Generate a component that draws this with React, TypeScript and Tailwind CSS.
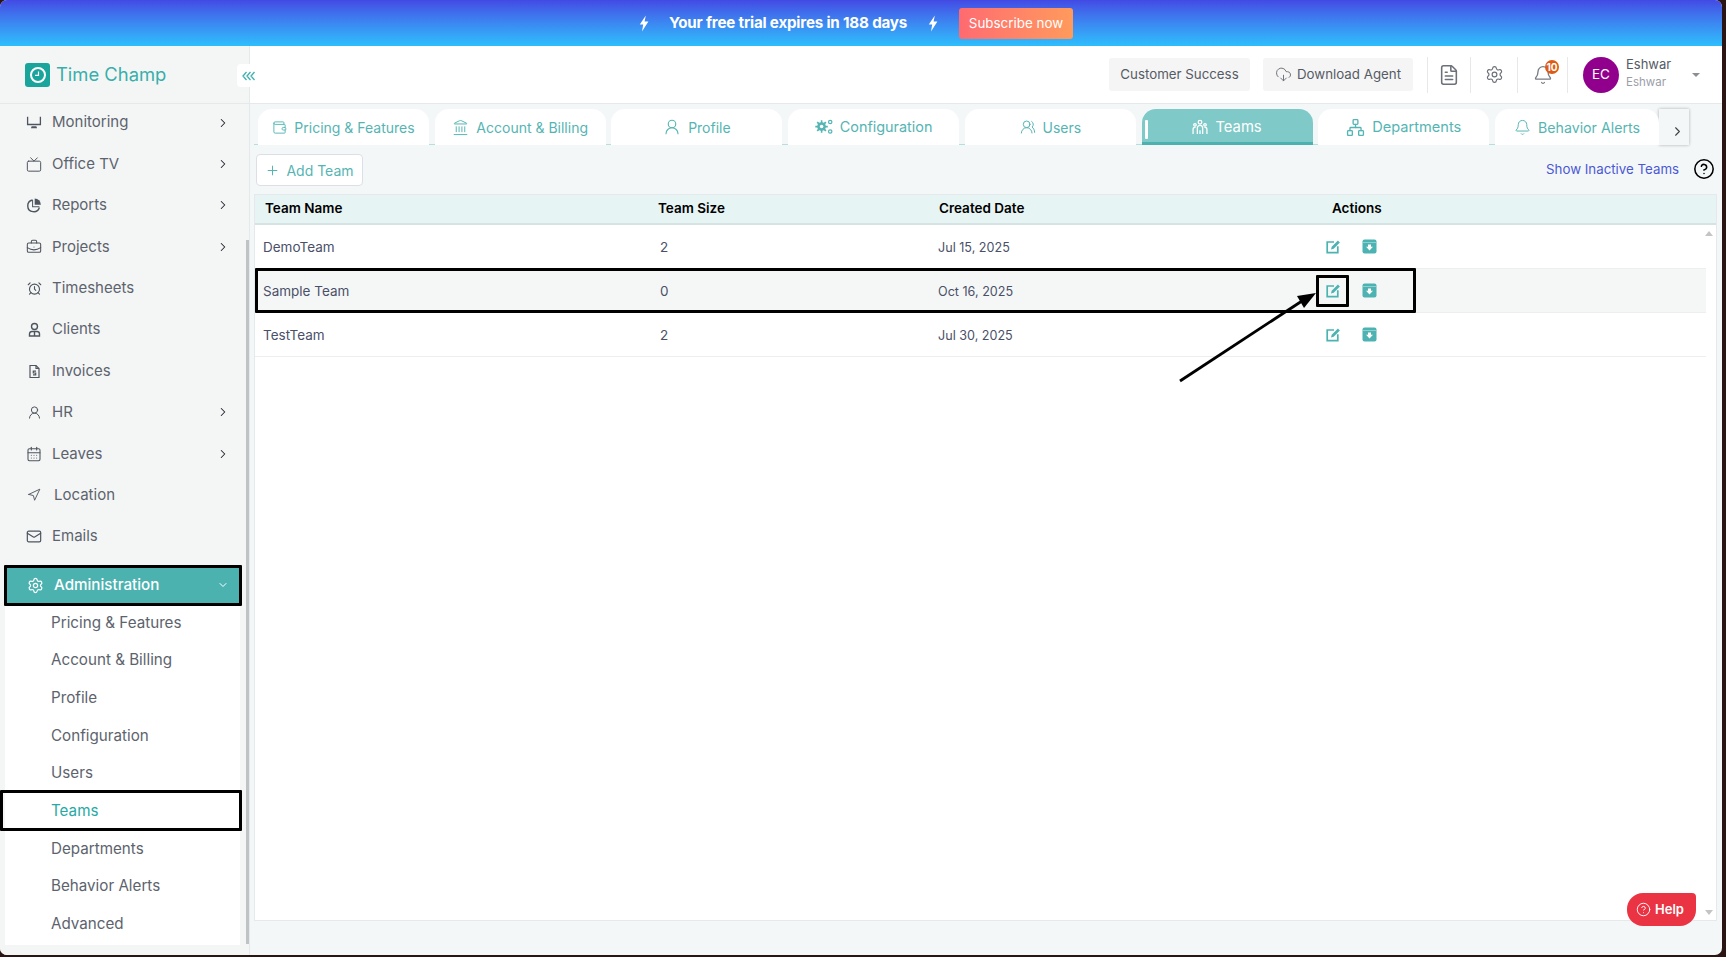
import {
  AlarmClock,
  Bell,
  BriefcaseBusiness,
  CalendarDays,
  ChevronDown,
  ChevronRight,
  CircleHelp,
  CloudDownload,
  FileText,
  Landmark,
  Mail,
  Navigation,
  Network,
  Plus,
  Settings,
  Tv,
  UserRound,
  UsersRound,
  Wallet,
} from "lucide-react";
import type { ReactNode } from "react";

function MonitorIcon() {
  return (
    <svg width="17" height="17" viewBox="0 0 17 17" fill="currentColor">
      <path d="M1 2.5h1.4v7.2h12.2V2.5H16v9H1z" />
      <path d="M6 12.5h5l.8 2H5.2z" />
    </svg>
  );
}

function ReportsIcon() {
  return (
    <svg width="17" height="17" viewBox="0 0 17 17" fill="none" stroke="currentColor" strokeWidth="1.5">
      <path d="M7 2.6a6.3 6.3 0 1 0 7.2 8" />
      <path d="M9.2 1v6.6h6.6A6.6 6.6 0 0 0 9.2 1z" fill="currentColor" stroke="none" />
      <path d="M7 2.6v7.2h7.2" strokeWidth="1.1" />
    </svg>
  );
}

function ClientIcon() {
  return (
    <svg width="15" height="15" viewBox="0 0 15 15" fill="none" stroke="currentColor" strokeWidth="1.4">
      <circle cx="7.5" cy="4.5" r="3" />
      <path d="M2.5 14v-2.2a2.5 2.5 0 0 1 2.5-2.3h5a2.5 2.5 0 0 1 2.5 2.3V14z" />
      <path d="M7.5 9.5V14" />
    </svg>
  );
}

function InvoiceIcon() {
  return (
    <svg width="15" height="15" viewBox="0 0 15 15" fill="none" stroke="currentColor" strokeWidth="1.2">
      <path d="M3 1.5h6l3 3v9H3z" />
      <path d="M9 1.5v3h3" />
      <path d="M9 7.2H6.3v1.8h2.4v1.8H6" />
    </svg>
  );
}

function TeamsIcon() {
  return (
    <svg width="16" height="16" viewBox="0 0 15 15" fill="none" stroke="currentColor" strokeWidth="1.2">
      <circle cx="7.5" cy="3" r="1.7" />
      <circle cx="2.8" cy="5.5" r="1.2" />
      <circle cx="12.2" cy="5.5" r="1.2" />
      <path d="M5 14V8.5a2.5 2.5 0 0 1 5 0V14M7.5 10.5V14" />
      <path d="M1 14V9.5a1.8 1.8 0 0 1 2.4-1.6M14 14V9.5a1.8 1.8 0 0 0-2.4-1.6" />
    </svg>
  );
}

function ConfigIcon() {
  return (
    <svg width="18" height="16" viewBox="0 0 18 16" fill="currentColor">
      <path d="M5.8 1.2h1.6v2l1.5.6 1.4-1.3 1.2 1.2-1.3 1.4.6 1.6h2v1.7h-2l-.6 1.5 1.3 1.4-1.2 1.2-1.4-1.3-1.5.6v2H5.8v-2l-1.6-.6-1.4 1.3-1.2-1.2 1.3-1.4-.6-1.5H.3V6.7h2l.6-1.6L1.6 3.7l1.2-1.2 1.4 1.3 1.6-.6z" />
      <circle cx="6.6" cy="7.5" r="1.8" fill="#ffffff" />
      <circle cx="15.2" cy="3" r="1.7" fill="none" stroke="currentColor" strokeWidth="1.2" />
      <circle cx="15.2" cy="12.5" r="1.7" fill="none" stroke="currentColor" strokeWidth="1.2" />
    </svg>
  );
}

function EditIcon() {
  return (
    <svg width="15" height="15" viewBox="0 0 15 15" fill="none">
      <path d="M8 3H1.2v10.6h10.6V7.2" stroke="#4db3b2" strokeWidth="1.7" />
      <path d="M5 10.4l.7-2.7 6.2-6.2 2 2-6.2 6.2z" fill="#4db3b2" />
    </svg>
  );
}

function ArchiveIcon() {
  return (
    <svg width="15" height="15" viewBox="0 0 15 15">
      <rect x="0.5" y="0.5" width="14" height="14" rx="2" fill="#4db3b2" />
      <path d="M1 3.6h13" stroke="#ffffff" strokeWidth="0.7" opacity="0.6" />
      <path d="M6 5.5h3v2.3h2L7.5 11.4 4 7.8h2z" fill="#ffffff" />
    </svg>
  );
}

function CollapseIcon() {
  return (
    <svg width="14" height="10" viewBox="0 0 14 10" fill="none" stroke="#3fb1ae" strokeWidth="1.3">
      <path d="M4.5 1 1 5l3.5 4M8.5 1 5 5l3.5 4M12.5 1 9 5l3.5 4" />
    </svg>
  );
}

function Bolt() {
  return (
    <svg width="10" height="17" viewBox="0 0 10 16" fill="#ffffff">
      <path d="M6.8 0 .8 9h3.4L3 16l6.4-10H5.6z" />
    </svg>
  );
}

const navItems: { label: string; icon: ReactNode; arrow?: boolean; gap?: string }[] = [
  { label: "Monitoring", icon: <MonitorIcon />, arrow: true },
  { label: "Office TV", icon: <Tv size={17} strokeWidth={1.5} />, arrow: true },
  { label: "Reports", icon: <ReportsIcon />, arrow: true },
  { label: "Projects", icon: <BriefcaseBusiness size={16} strokeWidth={1.6} />, arrow: true },
  { label: "Timesheets", icon: <AlarmClock size={15} strokeWidth={1.8} /> },
  { label: "Clients", icon: <ClientIcon /> },
  { label: "Invoices", icon: <InvoiceIcon /> },
  { label: "HR", icon: <UserRound size={15} strokeWidth={1.6} />, arrow: true },
  { label: "Leaves", icon: <CalendarDays size={16} strokeWidth={1.6} />, arrow: true },
  { label: "Location", icon: <Navigation size={14} strokeWidth={1.6} />, gap: "gap-[12px]" },
  { label: "Emails", icon: <Mail size={17} strokeWidth={1.8} /> },
];

const subItems = ["Pricing & Features", "Account & Billing", "Profile", "Configuration", "Users", "Teams", "Departments", "Behavior Alerts", "Advanced"];

const tabs: { label: string; icon: ReactNode; active?: boolean; cls: string }[] = [
  { label: "Pricing & Features", icon: <Wallet size={15} strokeWidth={1.5} />, cls: "w-[171px] text-[14px]" },
  { label: "Account & Billing", icon: <Landmark size={17} strokeWidth={1.4} />, cls: "w-[171px] text-[14px]" },
  { label: "Profile", icon: <UserRound size={18} strokeWidth={1.5} />, cls: "w-[171px] text-[14px]" },
  { label: "Configuration", icon: <ConfigIcon />, cls: "w-[171px] text-[14.4px]" },
  { label: "Users", icon: <UsersRound size={16} strokeWidth={1.5} />, cls: "w-[171px] text-[14px]" },
  { label: "Teams", icon: <TeamsIcon />, active: true, cls: "w-[171px] text-[14.8px]" },
  { label: "Departments", icon: <Network size={19} strokeWidth={1.7} />, cls: "w-[171px] pt-[1px] text-[14.6px]" },
  { label: "Behavior Alerts", icon: <Bell size={17} strokeWidth={1.4} />, cls: "w-[164px] pt-[1px] text-[14.2px]" },
];

const teams = [
  { name: "DemoTeam", size: "2", date: "Jul 15, 2025" },
  { name: "Sample Team", size: "0", date: "Oct 16, 2025", hl: true },
  { name: "TestTeam", size: "2", date: "Jul 30, 2025" },
];

export default function App() {
  return (
    <div className="h-screen w-screen overflow-hidden bg-[#2a1414] font-['Inter','Noto_Sans',sans-serif]">
      <div className="relative flex h-[955px] w-[1722px] flex-col overflow-hidden rounded-[7px] bg-[#f4f7f8]">
        {/* trial banner */}
        <div className="flex h-[46px] shrink-0 items-center bg-gradient-to-b from-[#4349e4] to-[#2dbefc] pl-[639px]">
          <Bolt />
          <span className="ml-[20px] w-[238px] whitespace-nowrap text-[15.2px] font-bold tracking-[-0.2px] text-white">Your free trial expires in 188 days</span>
          <span className="ml-[21px]"><Bolt /></span>
          <button className="ml-[21px] h-[31px] w-[114px] rounded-[3px] bg-gradient-to-r from-[#ff6a70] to-[#ff9a5c] text-[13.4px] text-white">Subscribe now</button>
        </div>

        <div className="flex min-h-0 flex-1">
          {/* sidebar */}
          <aside className="relative flex w-[250px] shrink-0 flex-col border-r border-[#e6e9ec] bg-[#f4f6f6]">
            <div className="flex h-[58px] shrink-0 items-center border-b border-[#e6e9ec] pl-[25px]">
              <div className="flex h-[24px] w-[25px] items-center justify-center rounded-[3px] bg-[#1aa59c]">
                <svg width="18" height="18" viewBox="0 0 18 18" fill="none" stroke="#ffffff">
                  <circle cx="9" cy="9" r="7" strokeWidth="2" />
                  <path d="M9.5 5.5v3.8H6" strokeWidth="1.2" />
                </svg>
              </div>
              <span className="ml-[6px] text-[18.4px] text-[#3aaeaa]">Time Champ</span>
            </div>
            <div className="absolute left-[237px] top-[18px] z-10 flex h-[23px] w-[24px] items-center justify-center rounded-[4px] bg-white">
              <CollapseIcon />
            </div>

            <nav className="-mt-[2px] flex flex-col">
              {navItems.map((item) => (
                <div key={item.label} className={`flex h-[41.4px] items-center pl-[26px] pr-[19px] text-[15px] text-[#5d636d] ${item.gap ?? "gap-[10px]"}`}>
                  <span className="flex w-[16px] items-center justify-center text-[#4f555f]">{item.icon}</span>
                  <span className="flex-1">{item.label}</span>
                  {item.arrow && <ChevronRight size={14} strokeWidth={1.8} className="text-[#20262c]" />}
                </div>
              ))}
            </nav>

            <div className="ml-[4px] mt-[8px] flex h-[41px] w-[238px] items-center gap-[10px] rounded-[1px] border-[3px] border-black bg-[#4cb2b0] pb-[1px] pl-[20px] pr-[10px] text-[15.2px] font-medium text-white">
              <Settings size={17} strokeWidth={1.7} />
              <span className="flex-1">Administration</span>
              <ChevronDown size={12} />
            </div>

            <div className="ml-[5px] flex h-[339px] w-[235px] flex-col bg-white">
              {subItems.map((s) => (
                <div key={s} className={`flex h-[37.7px] -translate-y-[2px] items-center pl-[46px] text-[15.2px] ${s === "Teams" ? "text-[#27a9a5]" : "text-[#5d636d]"}`}>
                  {s}
                </div>
              ))}
            </div>

            {/* teams outline */}
            <div className="pointer-events-none absolute left-0 top-[744px] h-[41px] w-[242px] rounded-[1px] border-[3px] border-black" />
            {/* scrollbar thumb */}
            <div className="absolute right-0 top-[194px] h-[704px] w-[3px] bg-[#bfc3c6]" />
          </aside>

          <main className="relative flex min-w-0 flex-1 flex-col">
            {/* header */}
            <header className="flex h-[58px] shrink-0 items-center border-b border-[#e6e9ec] bg-white">
              <div className="ml-[859px] flex h-[33px] w-[141px] items-center justify-center rounded-[3px] bg-[#f5f5f5] text-[13.3px] text-[#555b65]">Customer Success</div>
              <div className="ml-[13px] flex h-[33px] w-[150px] items-center justify-center gap-[5px] rounded-[3px] bg-[#f5f5f5] text-[13.3px] text-[#555b65]">
                <CloudDownload size={17} strokeWidth={1.4} className="text-[#6f747c]" />
                Download Agent
              </div>
              <div className="ml-[14px] flex h-[36px] w-[44px] items-center justify-center border-x border-[#e8e8e8] text-[#6b7079]">
                <FileText size={22} strokeWidth={1.7} />
              </div>
              <div className="flex h-[36px] w-[47px] items-center justify-center border-r border-[#e8e8e8] text-[#6b7079]">
                <Settings size={19} strokeWidth={1.5} />
              </div>
              <div className="relative flex h-[36px] w-[50px] items-center justify-center border-r border-[#e8e8e8] text-[#777c84]">
                <Bell size={20} strokeWidth={1.6} />
                <span className="absolute left-[27px] top-[3px] flex h-[14px] w-[14px] items-center justify-center rounded-full bg-[#dd5b16] text-[10px] font-bold leading-none text-white">10</span>
              </div>
              <div className="ml-[15px] flex h-[36px] w-[36px] items-center justify-center rounded-full bg-[#91008d] text-[13.5px] text-white">EC</div>
              <div className="ml-[7px] -mt-[4px] flex flex-col">
                <span className="text-[13px] leading-[18px] text-[#555b65]">Eshwar</span>
                <span className="text-[11.5px] leading-[18px] text-[#9a9ea8]">Eshwar</span>
              </div>
              <span className="ml-[21px] h-0 w-0 border-x-[4px] border-t-[4px] border-x-transparent border-t-[#8a8f96]" />
            </header>

            {/* tabs */}
            <div className="flex h-[41px] shrink-0 items-end pl-[4px]">
              <div className="flex h-[36px] w-[1405px] gap-[5.8px] border-b border-[#b5dfdd] pl-[4px]">
                {tabs.map((t) => (
                  <div
                    key={t.label}
                    className={`relative flex h-[36px] items-center justify-center gap-[7px] rounded-t-[14px] ${t.cls} ${
                      t.active ? "border-b-[3px] border-[#4cb2b0] bg-[#7fc9c8] pt-[3px] text-white" : "bg-white text-[#55b5b3]"
                    }`}
                  >
                    {t.active && <span className="absolute left-[3px] top-[11px] h-[19px] w-[3px] rounded-[1px] bg-white" />}
                    {t.icon}
                    {t.label}
                  </div>
                ))}
              </div>
              <div className="flex h-[36px] w-[30px] items-center justify-center bg-[#f4f7f8] pl-[6px] text-[#444] shadow-[0_0_3px_rgba(0,0,0,0.3)]">
                <ChevronRight size={15} className="mt-[8px]" strokeWidth={1.8} />
              </div>
            </div>

            {/* toolbar */}
            <div className="flex h-[49px] shrink-0 items-start pl-[6px] pt-[9px]">
              <button className="flex h-[32px] w-[107px] items-center justify-center gap-[6px] rounded-[4px] border border-[#dcdfe6] bg-white text-[14px] text-[#55b5b3]">
                <Plus size={15} strokeWidth={1.6} />
                Add Team
              </button>
              <span className="ml-[1183px] mt-[6px] text-[13.3px] leading-[18px] text-[#4a57d6]">Show Inactive Teams</span>
              <CircleHelp size={22} strokeWidth={1.7} className="ml-[14px] mt-[4px] text-black" />
            </div>

            {/* table */}
            <div className="ml-[4px] flex h-[727px] w-[1463px] flex-col border border-[#e6e9ec] bg-white">
              <div className="grid h-[30px] shrink-0 grid-cols-[401px_281px_389px_1fr] items-center border-b-2 border-[#d5e3e3] bg-[#e7f4f4] pb-[1px] text-[13.5px] font-semibold text-black">
                <span className="pl-[10px]">Team Name</span>
                <span className="pl-[2px]">Team Size</span>
                <span className="pl-[2px]">Created Date</span>
                <span className="pl-[6px]">Actions</span>
              </div>
              <div className="relative flex-1">
                {teams.map((t) => (
                  <div
                    key={t.name}
                    className={`grid h-[44px] w-[1451px] grid-cols-[401px_281px_389px_1fr] items-center border-b border-[#eceef0] text-[13.5px] text-[#4a5068] ${t.hl ? "bg-[#f5f7f7]" : ""}`}
                  >
                    <span className="pl-[8px] pt-[2px]">{t.name}</span>
                    <span className="pl-[4px] pt-[2px]">{t.size}</span>
                    <span className="pl-[1px] pt-[3px] text-[12.6px]">{t.date}</span>
                    <span className="flex items-center gap-[21px]">
                      <EditIcon />
                      <ArchiveIcon />
                    </span>
                  </div>
                ))}
                <span className="absolute right-[3px] top-[6px] h-0 w-0 border-x-[4px] border-b-[5px] border-x-transparent border-b-[#c4c4c4]" />
                <span className="absolute bottom-[5px] right-[3px] h-0 w-0 border-x-[4px] border-t-[5px] border-x-transparent border-t-[#c4c4c4]" />
              </div>
            </div>

            {/* help */}
            <button className="absolute left-[1377px] top-[847px] flex h-[33px] w-[69px] items-center justify-center gap-[4px] rounded-[16px] rounded-tr-[4px] bg-[#ea3443] pr-[3px] text-[13px] font-semibold text-white">
              <CircleHelp size={15} strokeWidth={1.5} />
              Help
            </button>
          </main>
        </div>

        {/* annotations */}
        <div className="pointer-events-none absolute left-[255px] top-[268px] h-[45px] w-[1161px] rounded-[1px] border-[3px] border-black" />
        <div className="pointer-events-none absolute left-[1316px] top-[275px] h-[32px] w-[33px] rounded-[1px] border-[3px] border-black" />
        <svg className="pointer-events-none absolute left-[1170px] top-[285px]" width="150" height="100" viewBox="0 0 150 100">
          <path d="M10 96 135 14" stroke="#000000" strokeWidth="2.8" />
          <path d="M146 8 127 11 134 23z" fill="#000000" />
        </svg>
      </div>
    </div>
  );
}
